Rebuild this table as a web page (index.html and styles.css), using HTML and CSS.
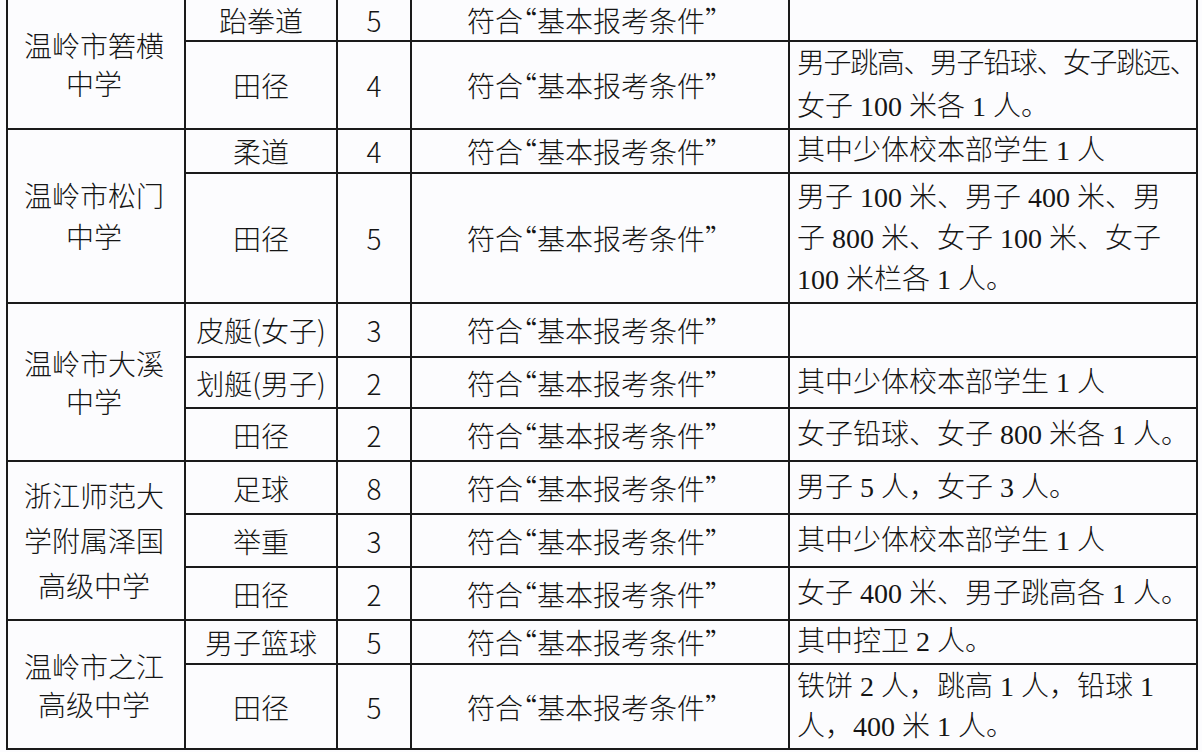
FILE: index.html
```html
<!DOCTYPE html>
<html lang="zh-CN">
<head>
<meta charset="utf-8">
<title>体育特长生招生表</title>
<link rel="stylesheet" href="styles.css">
</head>
<body>
<table class="sheet">
  <colgroup>
    <col class="w-school">
    <col class="w-sport">
    <col class="w-num">
    <col class="w-req">
    <col class="w-note">
  </colgroup>
  <tbody>
    <tr class="h42">
      <td class="school lh38" rowspan="2">温岭市箬横<br>中学</td>
      <td class="sport">跆拳道</td>
      <td class="num">5</td>
      <td class="req">符合<span class="q">“</span>基本报考条件<span class="q">”</span></td>
      <td class="note"></td>
    </tr>
    <tr class="h86">
      <td class="sport">田径</td>
      <td class="num">4</td>
      <td class="req">符合<span class="q">“</span>基本报考条件<span class="q">”</span></td>
      <td class="note lh43"><span class="tight">男子跳高、男子铅球、女子跳远、</span><br>女子 100 米各 1 人。</td>
    </tr>
    <tr class="h44">
      <td class="school lh41" rowspan="2">温岭市松门<br>中学</td>
      <td class="sport">柔道</td>
      <td class="num">4</td>
      <td class="req">符合<span class="q">“</span>基本报考条件<span class="q">”</span></td>
      <td class="note">其中少体校本部学生 1 人</td>
    </tr>
    <tr class="h130">
      <td class="sport">田径</td>
      <td class="num">5</td>
      <td class="req">符合<span class="q">“</span>基本报考条件<span class="q">”</span></td>
      <td class="note lh41">男子 100 米、男子 400 米、男<br>子 800 米、女子 100 米、女子<br>100 米栏各 1 人。</td>
    </tr>
    <tr class="h54">
      <td class="school lh38" rowspan="3">温岭市大溪<br>中学</td>
      <td class="sport">皮艇(女子)</td>
      <td class="num">3</td>
      <td class="req">符合<span class="q">“</span>基本报考条件<span class="q">”</span></td>
      <td class="note"></td>
    </tr>
    <tr class="h51">
      <td class="sport">划艇(男子)</td>
      <td class="num">2</td>
      <td class="req">符合<span class="q">“</span>基本报考条件<span class="q">”</span></td>
      <td class="note">其中少体校本部学生 1 人</td>
    </tr>
    <tr class="h53">
      <td class="sport">田径</td>
      <td class="num">2</td>
      <td class="req">符合<span class="q">“</span>基本报考条件<span class="q">”</span></td>
      <td class="note">女子铅球、女子 800 米各 1 人。</td>
    </tr>
    <tr class="h53">
      <td class="school lh45" rowspan="3">浙江师范大<br>学附属泽国<br>高级中学</td>
      <td class="sport">足球</td>
      <td class="num">8</td>
      <td class="req">符合<span class="q">“</span>基本报考条件<span class="q">”</span></td>
      <td class="note">男子 5 人，女子 3 人。</td>
    </tr>
    <tr class="h53">
      <td class="sport">举重</td>
      <td class="num">3</td>
      <td class="req">符合<span class="q">“</span>基本报考条件<span class="q">”</span></td>
      <td class="note">其中少体校本部学生 1 人</td>
    </tr>
    <tr class="h53">
      <td class="sport">田径</td>
      <td class="num">2</td>
      <td class="req">符合<span class="q">“</span>基本报考条件<span class="q">”</span></td>
      <td class="note">女子 400 米、男子跳高各 1 人。</td>
    </tr>
    <tr class="h44">
      <td class="school lh38" rowspan="2">温岭市之江<br>高级中学</td>
      <td class="sport">男子篮球</td>
      <td class="num">5</td>
      <td class="req">符合<span class="q">“</span>基本报考条件<span class="q">”</span></td>
      <td class="note">其中控卫 2 人。</td>
    </tr>
    <tr class="h85">
      <td class="sport">田径</td>
      <td class="num">5</td>
      <td class="req">符合<span class="q">“</span>基本报考条件<span class="q">”</span></td>
      <td class="note lh40">铁饼 2 人，跳高 1 人，铅球 1<br>人，400 米 1 人。</td>
    </tr>
  </tbody>
</table>
</body>
</html>
```

FILE: styles.css
```css
html, body {
  margin: 0;
  padding: 0;
  background: #fcfcfe;
}

body {
  width: 1202px;
  height: 752px;
  overflow: hidden;
  color: #151515;
  font-family: "Noto Sans CJK SC", sans-serif;
}

.sheet {
  border-collapse: collapse;
  table-layout: fixed;
  width: 1192px;
  margin: -2px 0 0 6px;
  font-size: 28px;
  font-weight: 300;
}

.w-school { width: 178px; }
.w-sport { width: 152px; }
.w-num { width: 74px; }
.w-req { width: 378px; }
.w-note { width: 408px; }

.sheet td {
  border: 2px solid #1a1a1a;
  padding: 0;
  vertical-align: middle;
  text-align: center;
  line-height: 40px;
  white-space: nowrap;
  overflow: hidden;
}

.h42 { height: 42px; }
.h44 { height: 44px; }
.h51 { height: 51px; }
.h53 { height: 53px; }
.h54 { height: 54px; }
.h85 { height: 85px; }
.h86 { height: 86px; }
.h130 { height: 130px; }

.sheet .school {
  padding-right: 4px;
}

.sheet .req {
  padding-right: 14px;
}

.q {
  font-feature-settings: "halt" 1;
}

.sheet .note {
  text-align: left;
  padding-left: 7px;
  font-family: "Liberation Serif", "Noto Sans CJK SC", serif;
}

.sheet .lh38 { line-height: 38px; }
.sheet .lh40 { line-height: 40px; }
.sheet .lh41 { line-height: 41px; }
.sheet .lh43 { line-height: 43px; }
.sheet .lh45 { line-height: 45px; }

.tight {
  letter-spacing: -1.4px;
}
```
